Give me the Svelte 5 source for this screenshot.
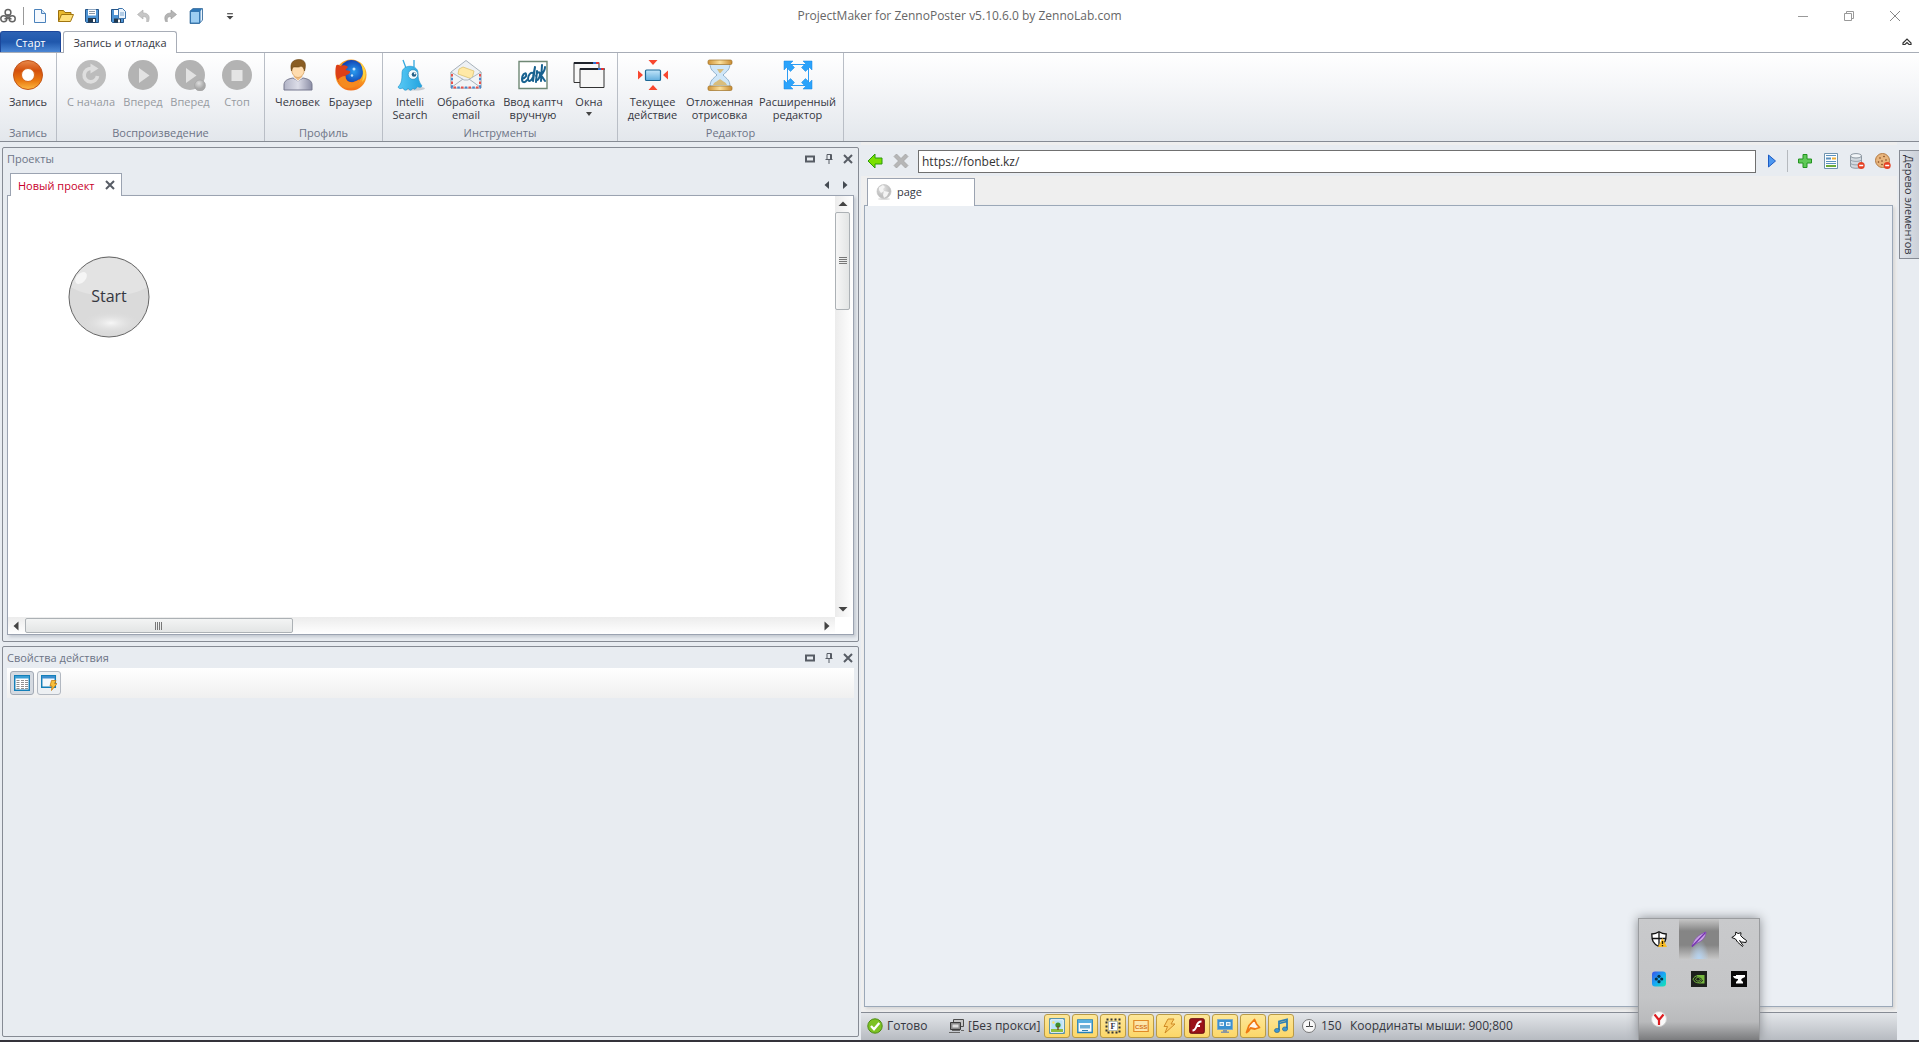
<script>
  let url = $state('https://fonbet.kz/');

  const quick = [
    { icon: 'file', label: 'Новый' },
    { icon: 'folder', label: 'Открыть' },
    { icon: 'save', label: 'Сохранить' },
    { icon: 'saveas', label: 'Сохранить как' },
    { icon: 'undo', label: 'Отменить' },
    { icon: 'redo', label: 'Повторить' },
    { icon: 'book', label: 'Справка' }
  ];

  const groups = [
    { title: 'Запись', size: 'g1', items: [{ icon: 'record', lines: ['Запись'], w: 54 }] },
    {
      title: 'Воспроизведение',
      size: 'g2',
      items: [
        { icon: 'restart', lines: ['С начала'], w: 54, off: true },
        { icon: 'forward', lines: ['Вперед'], w: 50, off: true },
        { icon: 'step', lines: ['Вперед'], w: 44, off: true },
        { icon: 'stop', lines: ['Стоп'], w: 50, off: true }
      ]
    },
    {
      title: 'Профиль',
      size: 'g3',
      items: [
        { icon: 'person', lines: ['Человек'], w: 54 },
        { icon: 'browser', lines: ['Браузер'], w: 52 }
      ]
    },
    {
      title: 'Инструменты',
      size: 'g4',
      items: [
        { icon: 'alien', lines: ['Intelli', 'Search'], w: 44 },
        { icon: 'mail', lines: ['Обработка', 'email'], w: 68 },
        { icon: 'captcha', lines: ['Ввод каптч', 'вручную'], w: 66 },
        { icon: 'windows', lines: ['Окна'], w: 46, drop: true }
      ]
    },
    {
      title: 'Редактор',
      size: 'g5',
      items: [
        { icon: 'current', lines: ['Текущее', 'действие'], w: 64 },
        { icon: 'hourglass', lines: ['Отложенная', 'отрисовка'], w: 70 },
        { icon: 'expand', lines: ['Расширенный', 'редактор'], w: 86 }
      ]
    }
  ];

  const toggles = [
    { icon: 'picture', label: 'Изображения' },
    { icon: 'popup', label: 'Всплывающие окна' },
    { icon: 'frame', label: 'Фреймы' },
    { icon: 'css', label: 'CSS' },
    { icon: 'bolt', label: 'Скрипты' },
    { icon: 'flash', label: 'Flash' },
    { icon: 'screen', label: 'Экран' },
    { icon: 'plugin', label: 'Плагины' },
    { icon: 'music', label: 'Звук' }
  ];

  const tray = ['shield', 'feather', 'wolf', 'gamepad', 'nvidia', 'anvil', 'yandex'];
</script>

{#snippet big(name)}
  <svg class="big" viewBox="0 0 32 32" aria-hidden="true">
    {#if name === 'record'}
      <circle cx="16" cy="16" r="14.5" fill="url(#gOrange)" stroke="#c2541a" />
      <circle cx="16" cy="16" r="6.500" fill="#fff" stroke="#d8681c" />
    {:else if name === 'restart'}
      <circle cx="16" cy="16" r="15" fill="#bcbcbc" />
      <path d="M22.5 17a6.7 6.7 0 1 1-6-7.5h2" fill="none" stroke="#dedede" stroke-width="3.6" />
      <path d="M15.5 4.500l8 5-8 5z" fill="#dedede" />
    {:else if name === 'forward'}
      <circle cx="16" cy="16" r="15" fill="#b3b3b3" />
      <path d="M12 9v15l10.500-7.500z" fill="#e2e2e2" />
    {:else if name === 'step'}
      <circle cx="16" cy="16" r="15" fill="#b3b3b3" />
      <path d="M12 9v15l10.500-7.500z" fill="#e2e2e2" />
      <circle cx="26" cy="26.500" r="5.500" fill="url(#gGreyBall)" stroke="#a0a0a0" stroke-width=".5" />
    {:else if name === 'stop'}
      <circle cx="16" cy="16" r="15" fill="#b3b3b3" />
      <path d="M10.500 11h11v11h-11z" fill="#e4e4e4" />
    {:else if name === 'person'}
      <path d="M2 31v-5c0-4 3-6 9-7l5 3 5-3c6 1 9 3 9 7v5z" fill="url(#gSuit)" stroke="#77798f" />
      <path d="M11.500 18.500l4.500 4 4.500-4-1-3h-7z" fill="#fff" stroke="#c9cad8" stroke-width=".6" />
      <path d="M12 14h8v4l-4 3.500-4-3.500z" fill="#efbb80" />
      <ellipse cx="16" cy="11" rx="6.300" ry="7.500" fill="#ffdcae" stroke="#d39c5c" stroke-width=".7" />
      <path d="M9.500 12C7.500 4 11 .5 17 .5c6.500 0 7.500 5 5.500 11.500-.5-3-1.500-4-3.500-5-2 2-6 .5-7.500 1-1.300 1-1.500 2.500-2 4z" fill="#8a5d22" stroke="#67410f" stroke-width=".6" />
    {:else if name === 'browser'}
      <circle cx="16" cy="16" r="15.500" fill="url(#gFox)" />
      <circle cx="16.500" cy="12.500" r="11.500" fill="url(#gGlobe)" />
      <path d="M1 7c1-2 3-1 4 0 3-1 6-1 8 1l-2.500 3 4.500 1c1 3-3 3-4.500 5 0 4 3 7 8 6 3-1 5-2 6-3 0 5-6 9-12 8C2 27-1 15 1 7z" fill="#dc3f17" />
      <path d="M3 21c1-2 4-4 7.500-4 0 4 3 7 8 6 3-1 5-2 6-3 1 4-4 9-11 9C9 29 5 26 3 21z" fill="#f58a1f" />
      <path d="M25 3c6 5 8 14 2 20 2-7 1-14-2-20z" fill="#ffd23e" />
      <circle cx="19" cy="10" r="1.500" fill="#bfe3ff" /><circle cx="17" cy="16.500" r="1.200" fill="#bfe3ff" />
    {:else if name === 'alien'}
      <ellipse cx="20" cy="29.500" rx="11" ry="2" fill="#9aa4ad" opacity=".5" />
      <path d="M12 9L9 1M20 8V1" stroke="#35a9df" stroke-width="1.300" fill="none" />
      <path d="M8 14c0-9 16-9 16 0 0 6 1 9 4 13-2 3-4 0-5 1s-2 4-4 1c-2 3-3 3-5 0-1 3-4 3-5 0-3 1-4 1-5-1 4-4 4-8 4-14z" fill="url(#gAlien)" stroke="#1d91c9" stroke-width=".6" />
      <circle cx="19" cy="15.500" r="4.800" fill="#f4fbff" stroke="#1b7fae" stroke-width=".6" />
      <circle cx="20" cy="15.500" r="2.300" fill="#245f86" /><circle cx="20.800" cy="14.500" r=".9" fill="#fff" />
    {:else if name === 'mail'}
      <path d="M1 13L16 1.500 31 13v16H1z" fill="#eef1f4" stroke="#a7b2bb" />
      <path d="M9 10l4-2 11 4-2 8-14-5z" fill="#ffe9a6" stroke="#d9bc63" stroke-width=".7" />
      <path d="M1 13l13 8h4l13-8v16H1z" fill="#f1f4f6" stroke="#aeb8c0" />
      <path d="M2 28l11-8M30 28l-11-8" stroke="#a5b0b9" />
      <path d="M2 15v13.500h28V15" fill="none" stroke="#e8504a" stroke-width="2" stroke-dasharray="2.500 5" />
      <path d="M2 18.800v9.700h28V18.800" fill="none" stroke="#4a86cb" stroke-width="2" stroke-dasharray="2.500 5" />
    {:else if name === 'captcha'}
      <path d="M2 2.500h28v27H2z" fill="#fff" stroke="#6f8875" stroke-width="1.400" />
      <g fill="none" stroke="#17618f" stroke-width="2" stroke-linecap="round" stroke-linejoin="round">
        <path d="M5 20c3-1 5-3 4-5s-4 1-4 5 3 4 5 1" />
        <path d="M16 14c-3-1-5 3-5 6s3 3 5-2l2-10-2 14M20 12l-1 11M19 17c1-4 4-5 4-2s-2 7-4 6M25 6l-1 16M28 8c0 3-2 6-4 8M24 16l4 6" />
      </g>
    {:else if name === 'windows'}
      <path d="M1 3.500h25v20H1z" fill="#f8f8f8" stroke="#333" /><path d="M1 3h25v2H1z" fill="#20242c" />
      <path d="M20 3h3v2h-3z" fill="#2f6fd0" /><path d="M23 3h3v2h-3z" fill="#d33" />
      <path d="M7 9.500h24v19H7z" fill="#f7f7f7" stroke="#333" /><path d="M7 9h24.500v2H7z" fill="#20242c" />
      <path d="M25 9h3v2h-3z" fill="#2f6fd0" /><path d="M28 9h3v2h-3z" fill="#d33" />
    {:else if name === 'current'}
      <path d="M11.500 1h9L16 6zM11.500 31h9L16 26zM1 11.500v9L6 16zM31 11.500v9L26 16z" fill="#f8472f" />
      <rect x="8.500" y="11" width="15" height="10.500" rx="1" fill="url(#gBlueBox)" stroke="#1b6795" stroke-width="1.200" />
    {:else if name === 'hourglass'}
      <path d="M6 4h20c0 7-3 8-7 12 4 4 7 5 7 12H6c0-7 3-8 7-12C9 12 6 11 6 4z" fill="#cfe6f8" stroke="#8fb0cc" />
      <path d="M13 10h7l-3.500 4h-1zM9 26c1-3 5-4 7-6 2 2 6 3 7 6z" fill="#d8bd7c" />
      <rect x="4" y="1" width="24" height="4.500" rx="1.500" fill="url(#gGold)" stroke="#9d7024" stroke-width=".7" />
      <rect x="4" y="27" width="24" height="4.500" rx="1.500" fill="url(#gGold)" stroke="#9d7024" stroke-width=".7" />
    {:else if name === 'expand'}
      <path d="M5.500 5.500h21v21h-21z" fill="none" stroke="#2d9df5" />
      <path d="M2 2h9L8.500 4.500l4 4L8.500 12.500l-4-4L2 11zM30 2v9l-2.500-2.500-4 4-4-4 4-4L21 2zM2 30V21l2.500 2.500 4-4 4 4-4 4L11 30zM30 30H21l2.500-2.500-4-4 4-4 4 4L30 21z" fill="#2ba3fb" stroke="#1687e0" stroke-width=".5" />
    {/if}
  </svg>
{/snippet}

{#snippet small(name)}
  <svg class="small" viewBox="0 0 16 16" aria-hidden="true">
    {#if name === 'logo'}
      <g fill="none" stroke="#646464" stroke-width="1.500">
        <circle cx="8" cy="4.500" r="2.900" /><circle cx="3.800" cy="10.800" r="3" /><circle cx="12.200" cy="10.800" r="3" />
        <path d="M8 6v4M8 10l-3.500 1M8 10l3.500 1" stroke-width="1.600" />
      </g>
    {:else if name === 'file'}
      <path d="M2.500 1.500h7l4 4v9h-11z" fill="#f5f9fe" stroke="#4b82bb" /><path d="M9.500 1.500v4h4" fill="#d4e5f7" stroke="#4b82bb" />
    {:else if name === 'folder'}
      <path d="M.5 13.500v-11h5l1.500 2h6v3" fill="#e9b92f" stroke="#9a6f0c" /><path d="M.5 13.500l3-7h12l-3 7z" fill="#ffe07a" stroke="#a1750f" />
    {:else if name === 'save'}
      <path d="M1.500 1.500h13v13h-12l-1-1z" fill="#4e94d4" stroke="#255487" /><path d="M4 1.500h8v6H4z" fill="#fff" /><path d="M5 3.500h6M5 5.500h6" stroke="#8a98a6" />
      <path d="M4 10h8v4.500H4z" fill="#22384e" /><path d="M9 11h2v3H9z" fill="#fff" />
    {:else if name === 'saveas'}
      <path d="M1.500 1.500h12v13h-11l-1-1z" fill="#4e94d4" stroke="#255487" /><path d="M4 10.500h7v4H4z" fill="#22384e" /><path d="M8 11.500h2v3H8z" fill="#fff" />
      <path d="M4 2h4v5H4z" fill="#fff" /><path d="M8.500.5h4l3 3v7h-7z" fill="#eaf3fc" stroke="#3f76ae" /><path d="M10 5h4M10 7h4" stroke="#7aa5cf" />
    {:else if name === 'undo'}
      <path d="M1.500 6.500L7 2v3c5 0 7.500 3 5.500 8.500l-2 0C11.500 10 10 8.500 7 8.500V11z" fill="#c6c6c6" stroke="#aaa" stroke-width=".6" />
    {:else if name === 'redo'}
      <path d="M14.500 6.500L9 2v3C4 5 1.500 8 3.500 13.500l2 0C4.500 10 6 8.500 9 8.500V11z" fill="#b4b4b4" stroke="#999" stroke-width=".6" />
    {:else if name === 'book'}
      <path d="M2 3l3-2.500h9.500V12l-3 3.500H2z" fill="#2d77b8" stroke="#1d5488" stroke-width=".6" /><path d="M2.500 3.500h9v11.500h-9z" fill="#9ccdf2" stroke="#2a6ca8" stroke-width=".8" /><path d="M12.500 3l1.500-2v11l-1.500 2z" fill="#e9f3fb" />
    {:else if name === 'back'}
      <path d="M1 8l7-7v4h7v6H8v4z" fill="#7be000" stroke="#2c9a0c" />
    {:else if name === 'cancel'}
      <path d="M1 3.500L3.500 1 8 5.500 12.500 1 15 3.500 10.500 8l4.500 4.500-2.500 2.500L8 10.500 3.500 15 1 12.500 5.500 8z" fill="#b6b6b6" stroke="#a0a0a0" stroke-width=".7" />
    {:else if name === 'go'}
      <path d="M4.500 2v12l7-6z" fill="#4c97f0" stroke="#1c5bc4" />
    {:else if name === 'add'}
      <path d="M6 1.500h4V6h4.500v4H10v4.500H6V10H1.500V6H6z" fill="#5fc957" stroke="#239321" />
    {:else if name === 'doc'}
      <path d="M1.500.5h13v15h-13z" fill="#fcfeff" stroke="#6f93ae" /><path d="M3 2.500h10M3 8.500h10M3 10.500h10" stroke="#5b91bd" /><path d="M3 4.500h5v2H3z" fill="#5b91bd" /><path d="M9 4.500h4v2H9z" fill="#ecac37" /><path d="M3 12h10v2H3z" fill="#6bab3a" />
    {:else if name === 'db'}
      <path d="M1.500 3v10c0 3 11 3 11 0V3" fill="#d2d9df" stroke="#8d98a2" /><path d="M1.500 6.500c0 2.500 11 2.500 11 0M1.500 10c0 2.500 11 2.500 11 0" fill="none" stroke="#98a3ad" /><ellipse cx="7" cy="2.800" rx="5.500" ry="2.200" fill="#f2f5f8" stroke="#8d98a2" />
      <circle cx="12.200" cy="12.500" r="3.500" fill="#e54124" /><path d="M10.200 12.500h4" stroke="#fff" stroke-width="1.500" />
    {:else if name === 'cookie'}
      <circle cx="7.500" cy="7.500" r="7" fill="#e8b57d" stroke="#b47a42" /><g fill="#7b431c"><circle cx="5" cy="5" r=".8" /><circle cx="9" cy="3.500" r=".8" /><circle cx="11" cy="7" r=".8" /><circle cx="7" cy="8" r=".8" /><circle cx="3.500" cy="9" r=".8" /><circle cx="7" cy="11.500" r=".8" /></g>
      <circle cx="12.200" cy="12.500" r="3.500" fill="#e54124" /><path d="M10.200 12.500h4" stroke="#fff" stroke-width="1.500" />
    {:else if name === 'globe'}
      <ellipse cx="8" cy="15" rx="6" ry="1" fill="#ddd" /><circle cx="8" cy="7.500" r="7" fill="url(#gWorld)" stroke="#c4c4c4" stroke-width=".7" />
      <path d="M3 3.500L7 1l2 2-2 2 1 2-3 2-2-3zM8 7l5 1-2 4-3 2-1-3z" fill="#f4f4f4" />
    {:else if name === 'table'}
      <path d="M.7.700h14.600v14.600H.7z" fill="#fff" stroke="#147fb8" stroke-width="1.500" /><path d="M1 1h14v2.500H1z" fill="#3b9fd5" />
      <path d="M2.500 5.500h3M2.500 7.500h3M2.500 9.500h3M2.500 11.500h3M2.500 13.500h3M7 5.500h3M7 7.500h3M7 9.500h3M7 11.500h3M7 13.500h3M11 5.500h3M11 7.500h3M11 9.500h3M11 11.500h3M11 13.500h3" stroke="#8f8f8f" />
    {:else if name === 'winbolt'}
      <path d="M.7.700h13.600v11.600H.7z" fill="#f4f8fb" stroke="#147fb8" stroke-width="1.500" /><path d="M1 1h13v2.500H1z" fill="#3b8fd0" />
      <path d="M10.500 5.500h4.500l-1.500 3H16l-5.500 7 .5-4.500H9z" fill="#f9c03b" stroke="#c47b13" stroke-width=".8" />
    {:else if name === 'ok'}
      <circle cx="8" cy="8" r="7.200" fill="#7dc223" stroke="#4d8d12" /><path d="M4 8l3 3.300L12.300 5" fill="none" stroke="#fff" stroke-width="2.300" />
    {:else if name === 'proxy'}
      <path d="M5.500 1.500h10v7h-10z" fill="#c6c6c6" stroke="#4d4d4d" /><path d="M2.500 4.500h10v7h-10z" fill="#8a8a8a" stroke="#3d3d3d" /><path d="M4.500 6.500h6v3h-6z" fill="#ddd" /><path d="M1 14.500h11M4 12.500h8M13 12.500h3" stroke="#666" />
    {:else if name === 'picture'}
      <path d="M1 1h14v14H1z" fill="#b9e2f8" stroke="#2278b4" stroke-width="1.400" /><path d="M1.700 1.700h12.600v12.600H1.700z" fill="none" stroke="#fff" /><path d="M2 11h12v3H2z" fill="#8fbe3f" /><circle cx="9" cy="7" r="2.600" fill="#3f8e2b" /><path d="M9 8v4" stroke="#71451f" stroke-width="1.300" /><circle cx="4.500" cy="4.500" r="1.200" fill="#ffe36b" />
    {:else if name === 'popup'}
      <path d="M.8 2h14.400v12.500H.8z" fill="#f7fbfe" stroke="#2380bb" stroke-width="1.400" /><path d="M1 2h14v3H1z" fill="#57afe0" /><path d="M3 7h10v3.500H3z" fill="#6daed6" /><path d="M5 12.500h6" stroke="#2f7fae" />
    {:else if name === 'frame'}
      <path d="M1.500 1.500h13v13h-13z" fill="none" stroke="#333" stroke-width="2" stroke-dasharray="2 2" /><path d="M3.500 3.500h9v9h-9z" fill="#fff" stroke="#9aa" stroke-width=".7" /><text x="5.500" y="11" font-family="Liberation Serif, serif" font-size="8" font-weight="bold" fill="#334">F</text>
    {:else if name === 'css'}
      <path d="M.8 2.500h14.400v11H.8z" fill="#fce6ab" stroke="#e08a25" stroke-width="1.200" /><text x="2" y="10.500" font-family="Liberation Sans, sans-serif" font-size="6" font-weight="bold" fill="#d46f13">CSS</text>
    {:else if name === 'bolt'}
      <path d="M7 1h6L10 6h4L4 15l2.500-6.500H3z" fill="#fbd06a" stroke="#d08b25" />
    {:else if name === 'flash'}
      <rect x=".7" y=".7" width="14.600" height="14.600" rx="1.500" fill="#9b1118" stroke="#650b10" /><path d="M12.500 3.500C8 3.500 8 7 7 9.500 6 12 5.500 12.500 3.500 12.500M7 8h4" fill="none" stroke="#fff" stroke-width="2" />
    {:else if name === 'screen'}
      <path d="M.5 1.500h15v10H.5z" fill="#3b91d1" stroke="#7fa9c6" /><path d="M2.500 4H7v4H2.500zM9 4h4.500v4H9z" fill="#eef7fd" /><path d="M3.500 6h2.500M10 6h2.500" stroke="#2a6d9e" /><path d="M6 12h4v1.500H6zM4 13.500h8v1.500H4z" fill="#8995a0" />
    {:else if name === 'plugin'}
      <path d="M1.500 14.500l2.500-7L9.500 1.500l2 4.500 3 3.500-4.500 1.500-4.500-1L3.500 13z" fill="#fff5e8" stroke="#f07812" stroke-width="1.800" stroke-linejoin="round" />
    {:else if name === 'music'}
      <path d="M6 12V3.500l8-2v9M6 5.500l8-2" fill="none" stroke="#2e7fb5" stroke-width="1.800" /><ellipse cx="4" cy="12.500" rx="2.600" ry="2.100" fill="#3d96cf" stroke="#1d5e8b" stroke-width=".6" /><ellipse cx="12" cy="11" rx="2.600" ry="2.100" fill="#3d96cf" stroke="#1d5e8b" stroke-width=".6" />
    {:else if name === 'clock'}
      <circle cx="8" cy="8" r="6.500" fill="#f8f8f8" stroke="#777" /><path d="M8.500 3.500v5H12M5 8.500h3" fill="none" stroke="#444" />
    {:else if name === 'shield'}
      <path d="M8 .8C5.500 2.500 3 3 .8 3c0 6 1 10 7.200 12.500C14.200 13 15.200 9 15.200 3 13 3 10.500 2.500 8 .8z" fill="#fff" stroke="#111" stroke-width="1.300" /><path d="M8 1v14M1 7.500h14" stroke="#111" stroke-width="1.300" />
      <path d="M11.500 7l4.500 9H7z" fill="#f9bd25" /><path d="M11.500 10v3M11.500 14v1.200" stroke="#2a1d00" stroke-width="1.300" />
    {:else if name === 'feather'}
      <path d="M1 15.500C2 9 8 3 15 1c0 4-3 9-9 11z" fill="#c9a5e3" stroke="#8140b8" stroke-width=".6" /><path d="M1 15.500L14.500 1.500" stroke="#7432ae" stroke-width="1.300" />
    {:else if name === 'wolf'}
      <path d="M.8 6.500L4.500 4l.3-3 2.200 1.500 3-.8-.3 3L12 7l3.500 2.500-.5 2-4.500-.5-2-1.500 3.500 5-.5 1-5-4.500L4.500 8z" fill="#fff" stroke="#111" />
    {:else if name === 'gamepad'}
      <rect x="1" y=".5" width="14" height="15" rx="3" fill="url(#gPad)" /><g fill="#063347"><circle cx="8" cy="5.300" r="1.600" /><circle cx="8" cy="10.700" r="1.600" /><circle cx="5.300" cy="8" r="1.600" /><circle cx="10.700" cy="8" r="1.600" /></g>
    {:else if name === 'nvidia'}
      <path d="M0 0h16v16H0z" fill="#1d201d" /><path d="M6 4h7.500v8.500H6c4-.5 5-2 6-3-2-3-4-4-6-4z" fill="#76b83f" /><path d="M2 8.200c2-4.500 7-4.500 9.500-.3-3 5-7 5-9.500.3zM4.500 8.200c1.500-2.500 3.500-2.500 5 0-1.500 2.500-3.500 2.500-5 0z" fill="none" stroke="#76b83f" />
    {:else if name === 'anvil'}
      <path d="M0 0h16v16H0z" fill="#090909" /><path d="M2 5h3V4h9v2l-3 1.500-1 1.500 2 2v1.500H5V11l2-2V8C4 8 2.500 7 2 5z" fill="#fff" />
    {:else if name === 'yandex'}
      <circle cx="8" cy="8" r="7.500" fill="#fafafa" stroke="#d0d0d0" /><path d="M3.500 3.500L8 9l4.500-5.500M8 8.500V14" fill="none" stroke="#dd1c20" stroke-width="2.200" />
    {/if}
  </svg>
{/snippet}

{#snippet panelTools()}
  <span class="tools">
    <button aria-label="Развернуть"><svg viewBox="0 0 10 10"><path d="M1 2.500h8v5H1z" fill="none" stroke="#575c65" stroke-width="2" /></svg></button>
    <button aria-label="Закрепить"><svg viewBox="0 0 10 10"><path d="M3 .5h4.500v5H3zM1.500 5.500h7M5 5.500V10" fill="none" stroke="#575c65" /><path d="M6 1h1.500v4H6z" fill="#575c65" /></svg></button>
    <button aria-label="Закрыть"><svg viewBox="0 0 10 10"><path d="M1 1l8 8M9 1L1 9" stroke="#575c65" stroke-width="2" /></svg></button>
  </span>
{/snippet}

<svg class="defs" aria-hidden="true">
  <defs>
    <linearGradient id="gOrange" x2="0" y2="1"><stop stop-color="#e88a4c" /><stop offset=".35" stop-color="#d4500c" /><stop offset=".7" stop-color="#ea7a12" /><stop offset="1" stop-color="#fdb944" /></linearGradient>
    <radialGradient id="gGreyBall" cx=".4" cy=".3"><stop stop-color="#dedede" /><stop offset="1" stop-color="#a8a8a8" /></radialGradient>
    <radialGradient id="gWorld" cx=".4" cy=".3"><stop stop-color="#e6e6e6" /><stop offset="1" stop-color="#c0c0c0" /></radialGradient>
    <linearGradient id="gSuit"><stop stop-color="#b1b3c6" /><stop offset=".5" stop-color="#dcdde8" /><stop offset="1" stop-color="#8b8da5" /></linearGradient>
    <linearGradient id="gFox" x2="0" y2="1"><stop stop-color="#f59a1c" /><stop offset=".6" stop-color="#f9a52a" /><stop offset="1" stop-color="#f36f16" /></linearGradient>
    <radialGradient id="gGlobe" cx=".6" cy=".5"><stop stop-color="#2a9cf0" /><stop offset="1" stop-color="#1145b5" /></radialGradient>
    <linearGradient id="gAlien"><stop stop-color="#58c9f5" /><stop offset="1" stop-color="#23a3df" /></linearGradient>
    <linearGradient id="gBlueBox" x2="0" y2="1"><stop stop-color="#c3e6fa" /><stop offset="1" stop-color="#62aedd" /></linearGradient>
    <linearGradient id="gGold"><stop stop-color="#cf9338" /><stop offset=".5" stop-color="#fbdf9a" /><stop offset="1" stop-color="#c88a30" /></linearGradient>
    <linearGradient id="gPad" x2="1" y2="1"><stop stop-color="#3b50e8" /><stop offset=".5" stop-color="#16a8f5" /><stop offset="1" stop-color="#15e8b0" /></linearGradient>
    <radialGradient id="gShine"><stop stop-color="#f7f7f7" /><stop offset="1" stop-color="#dadada" stop-opacity="0" /></radialGradient>
  </defs>
</svg>

<div class="app">
  <header class="titlebar">
    <div class="quick">
      {@render small('logo')}
      <i class="sep"></i>
      {#each quick as q}
        <button aria-label={q.label}>{@render small(q.icon)}</button>
      {/each}
      <button class="more" aria-label="Настройка панели"><svg viewBox="0 0 7 7"><path d="M1 1.500h5" stroke="#444" /><path d="M.5 3.500h6L3.500 6.500z" fill="#444" /></svg></button>
    </div>
    <h1>ProjectMaker for ZennoPoster v5.10.6.0 by ZennoLab.com</h1>
    <div class="winbtns">
      <button aria-label="Свернуть"><svg viewBox="0 0 12 12"><path d="M1 6.500h10" stroke="#999" /></svg></button>
      <button aria-label="Восстановить"><svg viewBox="0 0 12 12"><path d="M1.500 3.500h7v7h-7zM3.500 3.500v-2h7v7h-2" fill="none" stroke="#999" /></svg></button>
      <button aria-label="Закрыть окно"><svg viewBox="0 0 12 12"><path d="M1 1l10 10M11 1L1 11" stroke="#888" /></svg></button>
    </div>
  </header>

  <nav class="tabs">
    <button class="start">Старт</button>
    <button class="tab">Запись и отладка</button>
    <button class="collapse" aria-label="Свернуть ленту"><svg viewBox="0 0 10 8"><path d="M1 5l4-4 4 4v1.500H7L5 4.500 3 6.500H1z" fill="#fff" stroke="#333" stroke-width="1.200" /></svg></button>
  </nav>

  <section class="ribbon">
    {#each groups as g}
      <div class="group {g.size}">
        <div class="items">
          {#each g.items as it}
            <button class="cmd" disabled={it.off} style="width: {it.w}px">
              {@render big(it.icon)}
              {#each it.lines as line}<span>{line}</span>{/each}
              {#if it.drop}<svg class="caret" viewBox="0 0 6 4"><path d="M0 0h6L3 4z" fill="#444" /></svg>{/if}
            </button>
          {/each}
        </div>
        <div class="caption">{g.title}</div>
      </div>
    {/each}
  </section>

  <main class="work">
    <div class="left">
      <section class="panel projects">
        <header><h2>Проекты</h2>{@render panelTools()}</header>
        <div class="doctabs">
          <div class="doctab"><button class="name">Новый проект</button><button class="x" aria-label="Закрыть проект"><svg viewBox="0 0 10 10"><path d="M1 1l8 8M9 1L1 9" stroke="#575c65" stroke-width="2" /></svg></button></div>
          <span class="arrows">
            <button aria-label="Влево"><svg viewBox="0 0 10 10"><path d="M7 1v8L2.500 5z" fill="#444a52" /></svg></button>
            <button aria-label="Вправо"><svg viewBox="0 0 10 10"><path d="M3 1v8l4.500-4z" fill="#444a52" /></svg></button>
          </span>
        </div>
        <div class="canvas">
          <div class="sheet">
            <button class="node">
              <svg viewBox="0 0 82 82" aria-hidden="true"><circle cx="41" cy="41" r="40" fill="#dadada" /><path d="M2.500 31a39.500 39.500 0 0 1 77 0C60 43 22 43 2.500 31z" fill="#e3e3e3" /><ellipse cx="43" cy="67" rx="30" ry="12" fill="url(#gShine)" /><ellipse cx="13" cy="22" rx="7" ry="4.500" fill="#f5f5f5" transform="rotate(-45 13 22)" /><circle cx="41" cy="41" r="40" fill="none" stroke="#666" /></svg>
              <span>Start</span>
            </button>
          </div>
          <div class="vscroll">
            <svg viewBox="0 0 16 16"><path d="M3.500 10h9L8 5.500z" fill="#444" /></svg>
            <div class="thumb"><svg viewBox="0 0 8 8"><path d="M0 .5h8M0 2.500h8M0 4.500h8M0 6.500h8" stroke="#777" /></svg></div>
            <svg class="end" viewBox="0 0 16 16"><path d="M3.500 6h9L8 10.500z" fill="#444" /></svg>
          </div>
          <div class="hscroll">
            <svg viewBox="0 0 16 16"><path d="M10.500 3.500v9L5.500 8z" fill="#444" /></svg>
            <div class="thumb"><svg viewBox="0 0 8 8"><path d="M.5 0v8M2.500 0v8M4.500 0v8M6.500 0v8" stroke="#777" /></svg></div>
            <svg class="end" viewBox="0 0 16 16"><path d="M5.500 3.500v9L10.500 8z" fill="#444" /></svg>
          </div>
        </div>
      </section>

      <section class="panel props">
        <header><h2>Свойства действия</h2>{@render panelTools()}</header>
        <div class="propbar">
          <button class="pressed" aria-label="Свойства">{@render small('table')}</button>
          <button aria-label="События">{@render small('winbolt')}</button>
        </div>
      </section>
    </div>

    <div class="browser">
      <div class="addr">
        <button aria-label="Назад">{@render small('back')}</button>
        <button aria-label="Стоп загрузки">{@render small('cancel')}</button>
        <input type="text" aria-label="Адрес" bind:value={url} />
        <button class="go" aria-label="Перейти">{@render small('go')}</button>
        <i class="sep"></i>
        <button aria-label="Добавить вкладку">{@render small('add')}</button>
        <button aria-label="Исходный текст">{@render small('doc')}</button>
        <button aria-label="Очистить кэш">{@render small('db')}</button>
        <button aria-label="Очистить cookies">{@render small('cookie')}</button>
      </div>
      <div class="pagetabs"><button>{@render small('globe')}page</button></div>
      <div class="view"></div>
      <footer class="status">
        <span class="ready">{@render small('ok')}Готово</span>
        <span class="proxy">{@render small('proxy')}[Без прокси]</span>
        <div class="toggles">
          {#each toggles as t}
            <button aria-label={t.label} aria-pressed="true">{@render small(t.icon)}</button>
          {/each}
        </div>
        <span class="timer">{@render small('clock')}150</span>
        <span>Координаты мыши: 900;800</span>
      </footer>
    </div>

    <aside><button>Дерево элементов</button></aside>
  </main>

  <div class="tray">
    {#each tray as t}
      <button class:active={t === 'feather'} aria-label={t}>{@render small(t)}</button>
    {/each}
  </div>
</div>

<style>
  :global(body) { margin: 0; background: #35363c; }
  .app {
    display: flex;
    flex-direction: column;
    height: 100vh;
    box-sizing: border-box;
    border-bottom: 2px solid #34333a;
    background: #e8ecf1;
    color: #35373f;
    font: 11px/13px 'Open Sans', 'Noto Sans', sans-serif;
    overflow: hidden;
    position: relative;
  }
  .app :global(*) { box-sizing: border-box; }
  button { font: inherit; color: inherit; border: 0; padding: 0; background: none; display: flex; align-items: center; justify-content: center; white-space: nowrap; }
  h1, h2 { margin: 0; font: inherit; }
  svg { display: block; flex: none; }
  .defs { position: absolute; width: 0; height: 0; }
  .small { width: 16px; height: 16px; }
  .big { width: 32px; height: 32px; }

  .titlebar { display: grid; grid-template-columns: 1fr auto 1fr; height: 31px; background: #fff; align-items: center; flex: none; }
  .titlebar h1 { font-size: 12px; line-height: 16px; color: #666; }
  .quick { display: flex; align-items: center; }
  .quick button { width: 26px; height: 24px; }
  .quick .sep { width: 1px; height: 18px; background: #999; margin: 0 3px 0 7px; }
  .quick .more { width: 36px; margin-left: 3px; }
  .more svg { width: 8px; height: 8px; }
  .winbtns { justify-self: end; display: flex; padding-right: 1px; }
  .winbtns button { width: 46px; height: 28px; }
  .winbtns svg { width: 12px; height: 12px; }

  .tabs { display: flex; height: 22px; background: #fff; border-bottom: 1px solid #a8adb7; flex: none; }
  .start { width: 61px; background: linear-gradient(#2c62b4, #1f57ac 50%, #4b87d5); border: 1px solid #1c479b; border-bottom: 0; border-radius: 3px 3px 0 0; color: #fff; }
  .tab { width: 114px; margin: 0 0 -1px 2px; border: 1px solid #a8adb7; border-bottom: 0; border-radius: 3px 3px 0 0; background: #fff; }
  .collapse { margin-left: auto; width: 24px; }
  .collapse svg { width: 10px; height: 8px; }

  .ribbon { display: flex; height: 89px; background: linear-gradient(#fff, #f6f7f9 35%, #e3e7ec); border-bottom: 1px solid #868b94; flex: none; }
  .group { display: flex; flex-direction: column; border-right: 1px solid #b9bec6; }
  .g1 { width: 57px; }
  .g2 { width: 208px; }
  .g3 { width: 118px; }
  .g4 { width: 235px; }
  .g5 { width: 226px; }
  .items { display: flex; justify-content: center; height: 73px; padding-top: 6px; }
  .g2 .items { padding-left: 5px; }
  .cmd { flex-direction: column; justify-content: flex-start; }
  .cmd .big { margin-bottom: 4px; }
  .cmd:disabled { color: #969aa0; }
  .caret { width: 6px; height: 4px; margin-top: 4px; }
  .caption { text-align: center; color: #6d7486; }

  .work { flex: 1; min-height: 0; display: grid; grid-template-columns: 859fr 1038fr 22px; }
  .left { display: grid; grid-template-rows: 496fr 391fr; gap: 4px; padding: 5px 0 3px 2px; min-height: 0; }
  .panel { border: 1px solid #868b94; border-radius: 2px; display: flex; flex-direction: column; min-height: 0; padding: 0 4px; }
  .panel header { display: flex; justify-content: space-between; align-items: center; height: 21px; flex: none; }
  .panel h2 { color: #6d7486; }
  .tools { display: flex; margin-right: -3px; }
  .tools button { width: 19px; height: 16px; }
  .tools svg, .x svg, .arrows svg { width: 10px; height: 10px; }

  .doctabs { display: flex; justify-content: space-between; height: 27px; flex: none; position: relative; z-index: 1; margin-bottom: -1px; padding: 4px 0 0 3px; }
  .doctab { display: flex; justify-content: space-between; align-items: center; width: 112px; padding: 0 6px 0 7px; border: 1px solid #9ba3b1; border-bottom: 0; background: #fff; }
  .doctab .name { color: #c8002c; }
  .arrows { display: flex; align-items: center; }
  .arrows button { width: 18px; height: 16px; }
  .canvas { flex: 1; min-height: 0; margin-bottom: 6px; border: 1px solid #9ba3b1; background: #fff; display: grid; grid-template: 1fr 17px / 1fr 18px; box-shadow: 2px 2px 3px #c3c8d0; }
  .sheet { position: relative; }
  .node { position: absolute; left: 60px; top: 60px; width: 82px; height: 82px; font-size: 16px; line-height: 20px; }
  .node svg { position: absolute; inset: 0; width: 82px; height: 82px; }
  .node span { position: relative; padding-bottom: 2px; }
  .vscroll { display: flex; flex-direction: column; align-items: flex-start; background: linear-gradient(90deg, #ececec, #fff); }
  .vscroll > svg, .hscroll > svg { width: 16px; height: 16px; }
  .thumb { display: flex; align-items: center; justify-content: center; border: 1px solid #acb1b5; border-radius: 2px; background: linear-gradient(#f3f4f4, #e3e5e5); }
  .thumb svg { width: 8px; height: 8px; }
  .vscroll .thumb { width: 15px; height: 98px; background: linear-gradient(90deg, #f6f6f6, #e3e5e5); }
  .vscroll .end { margin-top: auto; }
  .hscroll { display: flex; align-items: center; background: linear-gradient(#ececec, #fff); grid-column: 1; }
  .hscroll .thumb { height: 15px; width: 268px; margin-left: 1px; }
  .hscroll .end { margin-left: auto; }

  .propbar { height: 30px; display: flex; gap: 3px; align-items: center; padding-left: 3px; background: linear-gradient(#fff, #f0f0f0); }
  .propbar button { width: 24px; height: 24px; border: 1px solid #b2b8c1; border-radius: 3px; background: #edf0f3; }
  .propbar .pressed { background: #d5dae1; border-color: #a3aab5; }

  .browser { display: flex; flex-direction: column; min-width: 0; min-height: 0; background: #efefef; margin-left: 2px; }
  .addr { display: flex; align-items: center; height: 31px; margin-top: 3px; padding: 1px 1px 0 1px; background: #e8ecf1; flex: none; }
  .addr button { width: 26px; height: 24px; }
  .addr input { flex: 1; min-width: 0; height: 23px; margin-left: 4px; padding: 0 3px; border: 1px solid #707070; background: #fff; font: inherit; font-size: 12px; line-height: 16px; color: #333; }
  .addr .go { width: 31px; }
  .addr .sep { width: 1px; height: 22px; background: #b5b9be; margin-right: 4px; }
  .pagetabs { height: 30px; display: flex; align-items: flex-end; padding-left: 6px; margin-bottom: -1px; position: relative; z-index: 1; flex: none; }
  .pagetabs button { width: 108px; height: 28px; justify-content: flex-start; gap: 5px; padding: 0 0 2px 8px; border: 1px solid #9ba3b1; border-bottom: 0; background: #fff; }
  .view { flex: 1; min-height: 0; margin: 0 4px 5px 3px; border: 1px solid #9ba8b8; background: #ebeff4; box-shadow: 2px 2px 3px #d5d5d5; }
  .status { display: flex; align-items: center; height: 28px; flex: none; padding: 0 0 1px 6px; border-top: 1px solid #868b94; background: linear-gradient(#e3e6ea, #b7bbc1); font-size: 12px; line-height: 16px; }
  .status span { display: flex; align-items: center; gap: 4px; white-space: nowrap; }
  .ready { width: 81px; }
  .proxy { width: 96px; }
  .toggles { display: flex; gap: 2px; }
  .toggles button { width: 26px; height: 24px; border: 1px solid #b99a45; border-radius: 3px; background: linear-gradient(#fde79a, #fcd768); }
  .timer { width: 49px; margin-left: 7px; }

  aside { display: flex; align-items: flex-start; justify-content: flex-end; padding-top: 8px; }
  aside button { width: 20px; height: 109px; writing-mode: vertical-rl; border: 1px solid #868b94; border-right: 0; background: linear-gradient(90deg, #dfe3e9, #ccd1d9); }

  .tray { position: absolute; right: 159px; bottom: 0; width: 122px; height: 122px; display: grid; grid-template: repeat(3, 40px) / repeat(3, 40px); border: 1px solid #9a9c9f; border-bottom: 0; background: linear-gradient(#c9cacc, #c4c5c7 65%, #b9babc 85%, #7b7c7e); box-shadow: 0 0 10px #8a8d92; }
  .tray .active { background: radial-gradient(ellipse at 50% 100%, #b5d4f3, #b5d4f300 35%), linear-gradient(#c6c6c6, #858585 30%, #858585 65%, #c6c6c6); }
</style>
